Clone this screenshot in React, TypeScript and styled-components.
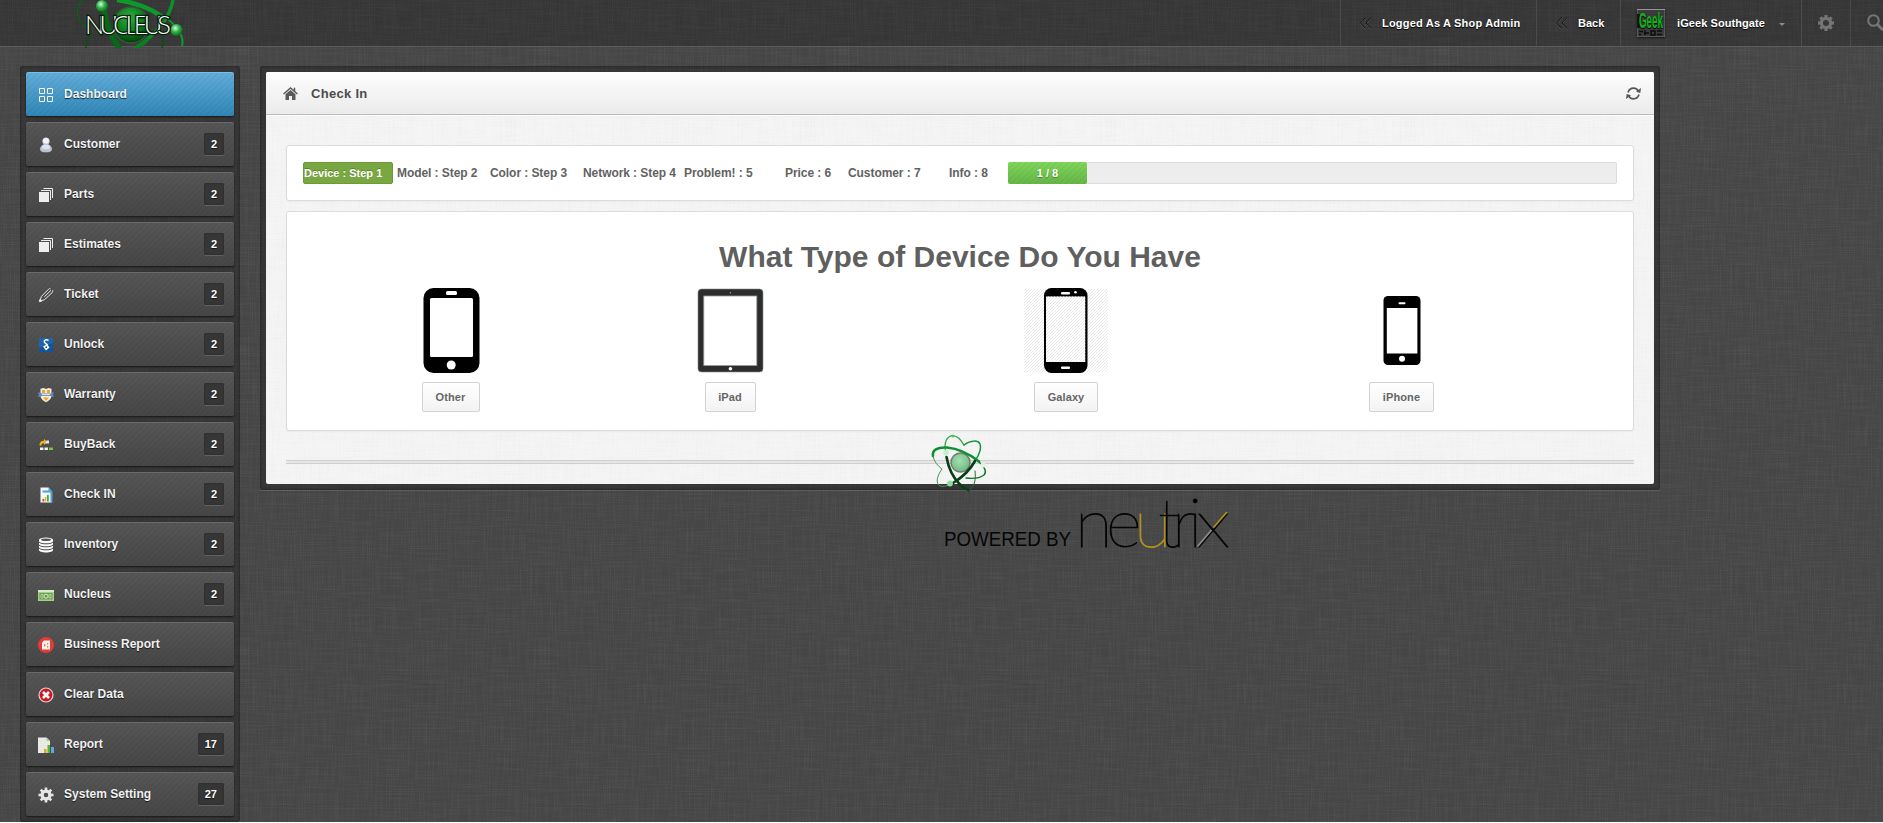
import React from "react";
import styled, { createGlobalStyle, css } from "styled-components";

const linen = (tone: number, strength: number, size = 300) => {
  const layer = (id: string, fx: string, seed: number) =>
    `<filter id="${id}" x="0" y="0" width="100%" height="100%"><feTurbulence type="fractalNoise" baseFrequency="${fx}" numOctaves="2" seed="${seed}" stitchTiles="stitch"/><feColorMatrix values="0 0 0 0 ${tone} 0 0 0 0 ${tone} 0 0 0 0 ${tone} ${strength} 0 0 0 ${-strength * 0.42}"/></filter><rect width="100%" height="100%" filter="url(#${id})"/>`;
  const svg = `<svg xmlns="http://www.w3.org/2000/svg" width="${size}" height="${size}">${layer("h", "0.025 0.95", 4)}${layer("v", "0.95 0.025", 9)}</svg>`;
  return `url("data:image/svg+xml,${encodeURIComponent(svg)}")`;
};

const darkLinen = linen(1, 0.1);
const lightLinen = linen(0, 0.035);
const stripes =
  "repeating-linear-gradient(135deg, rgba(0,0,0,0.07) 0 1px, transparent 1px 4.243px)";

const Global = createGlobalStyle`
  * { box-sizing: border-box; }
  html, body { margin: 0; padding: 0; }
  body {
    background: #fff;
    font-family: "Liberation Sans", Arial, sans-serif;
    font-size: 12px;
    color: #666;
    overflow: hidden;
  }
`;

const Page = styled.div`
  height: 822px;
  overflow: hidden;
  background: #454545 ${darkLinen};
`;

const TopBar = styled.header`
  height: 47px;
  display: flex;
  justify-content: space-between;
  background: rgba(0, 0, 0, 0.22);
  border-bottom: 1px solid #5b5b5b;
`;

const Brand = styled.div`
  height: 48px;
  padding-left: 72px;
`;

const TopNav = styled.nav`
  display: flex;
  width: 543px;
  overflow: hidden;
`;

const TopItem = styled.a<{ $w: number; $pad: number; $gap?: number; $ls?: number }>`
  flex: none;
  width: ${(p) => p.$w}px;
  padding: 0 0 0 ${(p) => p.$pad}px;
  display: flex;
  align-items: center;
  gap: ${(p) => p.$gap ?? 0}px;
  border-left: 1px solid #4b4b4b;
  color: #fff;
  font-size: 11px;
  font-weight: bold;
  letter-spacing: ${(p) => p.$ls ?? 0}px;
  white-space: nowrap;
  text-shadow: 0 1px 1px #000;
`;

const Avatar = styled.span`
  width: 28px;
  height: 28px;
  display: flex;
  flex: none;
  box-shadow: 0 1px 2px rgba(0, 0, 0, 0.6);
`;

const Caret = styled.span`
  border: 3px solid transparent;
  border-top-color: #8a8a8a;
  border-bottom: 0;
  margin: 2px 0 0 2px;
`;

const Columns = styled.div`
  display: flex;
  align-items: flex-start;
  gap: 20px;
  padding: 19px 0 0 20px;
`;

const frame = css`
  padding: 6px;
  background: rgba(0, 0, 0, 0.24);
  border-radius: 3px;
  box-shadow: inset 0 0 3px rgba(0, 0, 0, 0.5), 0 1px 0 rgba(255, 255, 255, 0.12);
`;

const Sidebar = styled.aside`
  ${frame}
  width: 220px;
  height: 756px;
  display: flex;
  flex-direction: column;
  gap: 6px;
`;

const SideItem = styled.a<{ $active?: boolean }>`
  height: 44px;
  flex: none;
  display: flex;
  align-items: center;
  padding: 0 10px 0 12px;
  border-radius: 2px;
  color: #f2f2f2;
  font-weight: bold;
  text-shadow: 0 1px 1px rgba(0, 0, 0, 0.7);
  background: ${stripes},
    ${(p) => (p.$active ? "linear-gradient(#62addb, #2f86b5)" : "linear-gradient(#565656, #464646)")};
  box-shadow: inset 0 1px 0 ${(p) => (p.$active ? "#7dbde3" : "#6a6a6a")}, 0 1px 2px rgba(0, 0, 0, 0.6);
`;

const SideIcon = styled.span`
  width: 16px;
  height: 16px;
  margin: 1px 10px 0 0;
  display: flex;
`;

const SideLabel = styled.span`
  flex: 1;
  margin-top: -1px;
  letter-spacing: 0.03px;
  white-space: nowrap;
`;

const Badge = styled.span`
  height: 22px;
  min-width: 20px;
  padding: 0 7px;
  line-height: 22px;
  border-radius: 2px;
  background: #363636;
  color: #fff;
  font-size: 11px;
  text-align: center;
  box-shadow: inset 0 0 2px #222, 0 1px 0 #626262;
`;

const MainColumn = styled.main`
  width: 1400px;
`;

const Frame = styled.section`
  ${frame}
  height: 424px;
`;

const Panel = styled.div`
  position: relative;
  height: 412px;
  border-radius: 2px;
  background: #f5f5f5 ${lightLinen};
`;

const PanelHead = styled.header`
  height: 43px;
  display: flex;
  align-items: center;
  padding: 0 13px 0 17px;
  border-bottom: 1px solid #bcbcbc;
  box-shadow: 0 1px 0 #fff;
  border-radius: 2px 2px 0 0;
  background: linear-gradient(#fdfdfd, #ebebeb);
`;

const PanelTitle = styled.h1`
  flex: 1;
  margin: 0 0 0 13px;
  font-size: 13px;
  letter-spacing: 0.3px;
  color: #4c4c4c;
`;

const PanelBody = styled.div`
  padding: 30px 20px 0;
`;

const Card = styled.div`
  background: #fff;
  border: 1px solid #dcdcdc;
  border-radius: 3px;
  box-shadow: 0 1px 2px rgba(0, 0, 0, 0.04);
`;

const StepCard = styled(Card)`
  height: 56px;
  padding: 16px;
  display: flex;
`;

const Step = styled.span<{ $w: number }>`
  flex: none;
  width: ${(p) => p.$w}px;
  line-height: 22px;
  font-weight: bold;
  color: #626262;
  letter-spacing: -0.07px;
  white-space: nowrap;
`;

const ActiveStep = styled.span`
  flex: none;
  width: 90px;
  height: 22px;
  margin-right: 4px;
  line-height: 21px;
  border: 1px solid #6b9a37;
  border-radius: 2px;
  background: #79a843;
  color: #fff;
  font-size: 11px;
  font-weight: bold;
  white-space: nowrap;
  text-shadow: 0 -1px 0 rgba(0, 0, 0, 0.25);
`;

const Progress = styled.div`
  flex: 1;
  height: 22px;
  border: 1px solid #dcdcdc;
  border-radius: 2px;
  background: #ededed;
`;

const ProgressFill = styled.div`
  width: 79px;
  height: 22px;
  margin: -1px;
  border-radius: 2px;
  line-height: 22px;
  text-align: center;
  color: #fff;
  font-size: 11px;
  font-weight: bold;
  text-shadow: 0 1px 1px rgba(0, 0, 0, 0.3);
  background: ${stripes}, linear-gradient(#7fd65a, #66b548);
`;

const DeviceCard = styled(Card)`
  height: 220px;
  margin-top: 10px;
`;

const Question = styled.h2`
  margin: 27px 0 13px;
  line-height: 36px;
  font-size: 30px;
  text-align: center;
  color: #5f5f5f;
`;

const DeviceGrid = styled.div`
  display: grid;
  grid-template-columns: 223px 336px 336px 335px;
  padding-left: 52px;
`;

const Device = styled.div`
  display: flex;
  flex-direction: column;
  align-items: center;
  gap: 8px;
`;

const DeviceButton = styled.button<{ $w: number }>`
  width: ${(p) => p.$w}px;
  height: 30px;
  padding: 0;
  border: 1px solid #d2d2d2;
  border-radius: 2px;
  background: linear-gradient(#fff, #f3f3f3);
  font: bold 11px "Liberation Sans", Arial, sans-serif;
  letter-spacing: 0.1px;
  color: #666;
`;

const Rule = styled.div`
  height: 4px;
  margin-top: 29px;
  border: 1px solid #cfcfcf;
  border-width: 1px 0;
  background: #e6e6e6;
`;

const AtomMark = styled.div`
  position: absolute;
  left: 664px;
  top: 361px;
  width: 62px;
  height: 62px;
`;

const Footer = styled.footer`
  display: flex;
  padding: 8px 0 0 680px;
`;

const icons: Record<string, React.ReactNode> = {
  dashboard: (
    <g fill="none" stroke="#f4f4f4" strokeWidth="1">
      <path d="M1.500 1.500h5v5h-5zM9.500 1.500h5v5h-5zM1.500 9.500h5v5h-5zM9.500 9.500h5v5h-5z" />
    </g>
  ),
  customer: (
    <g>
      <path d="M8 0.500c-2.500 0-3.700 1.800-3.700 3.700 0 1.400.6 2.400 1.300 3.300C3.500 8.500 2 10 2 12c0 2.500 2.500 3.300 6 3.300s6-.8 6-3.300c0-2-1.500-3.500-3.600-4.500.7-.9 1.300-1.900 1.300-3.300C11.700 2.300 10.500.5 8 .5z" fill="#bcc2d6" />
      <ellipse cx="8" cy="3.800" rx="3" ry="2.800" fill="#f2f3f8" />
      <ellipse cx="8" cy="10" rx="4" ry="2.200" fill="#dfe2ee" />
    </g>
  ),
  stack: (
    <g>
      <path d="M1 5h10v10H1z" fill="#eee" />
      <path d="M3 3.500h9.500V13M5.500 1.500h9V11" fill="none" stroke="#eee" strokeWidth="1" />
    </g>
  ),
  pencil: (
    <g fill="none" stroke="#e6e6e6" strokeWidth="1">
      <path d="M2 14l1.300-4.500 7.200-7.300c.8-.8 1.500-.8 2-.3M2 14l4.500-1.300L14 5.800c1-.9.800-2 .5-2.700M6.300 9.800L13 3.300" />
      <path d="M1.300 14.700l.8-2.700 1.900 1.900z" fill="#ececec" />
    </g>
  ),
  unlock: (
    <g>
      <path d="M1 1h14v14H1z" fill="#12539b" />
      <path d="M1 1h14v5L1 11z" fill="#2a71b8" opacity=".6" />
      <path d="M10.500 3.500C8.500 2 6 3 6.300 4.800 6.500 6.300 9.500 7 9.500 8.500" fill="none" stroke="#fff" strokeWidth="1.500" />
      <path d="M5 9.500l4-2.300 2.500 3.300-3.500 3z" fill="#fff" />
      <circle cx="8.300" cy="10.200" r=".9" fill="#12539b" />
    </g>
  ),
  warranty: (
    <g>
      <path d="M2.500 1.800L5.500 1 8 2l2.500-1 3 .8v7c0 3-2.500 5-5.500 6.500C5 13.800 2.500 11.800 2.500 8.800z" fill="#f6eddc" />
      <path d="M4 3h3v3H4zM9 3h3v3H9zM5 10.500h6l-3 3.500z" fill="#f1a32c" />
      <path d="M0 5.500h3v1h10v-1h3l-1 2 1 2.200h-3L13 9H3l-.2.700H0l1-2.200z" fill="#5d8fc0" />
      <path d="M4 7h8v1.200H4z" fill="#cfe0f0" />
    </g>
  ),
  buyback: (
    <g>
      <path d="M1.500 8.500C1.500 5 3.500 3.800 6 3.800V2l3.500 3L6 8V6.200C4 6.200 3.500 7 3.500 8.500z" fill="#f2b21d" />
      <path d="M8.500 3.500H11v3H7.500z" fill="#dfe8fa" />
      <path d="M2 10.500h3.400V13H2zM6.500 10.500h3.400V13H6.500z" fill="#f4f4f4" />
      <path d="M11 10.500h4V13h-4z" fill="#72c83a" />
    </g>
  ),
  checkin: (
    <g>
      <path d="M2.500.5h8l3.500 4v11H2.500z" fill="#f3f8fc" />
      <path d="M10.500.5l4 4v11h-2v-10h-8v-2h6z" fill="#4ba0d8" />
      <path d="M4.500 12h1.800v2.500H4.500z" fill="#e33" />
      <path d="M7 10h1.300v4.500H7z" fill="#f5a623" />
      <path d="M9 8h1.800v6.500H9z" fill="#3cb521" />
    </g>
  ),
  inventory: (
    <g>
      <path d="M1 3v10c0 1.400 3 2.500 7 2.500s7-1.100 7-2.500V3z" fill="#fafafa" />
      <ellipse cx="8" cy="3" rx="7" ry="2.500" fill="#fff" />
      <ellipse cx="8" cy="2.800" rx="5" ry="1.200" fill="#555" />
      <path d="M1 5c1.500 1.500 4 1.800 7 1.800s5.500-.3 7-1.800M1 8c1.500 1.500 4 1.800 7 1.800S13.500 9.500 15 8M1 11c1.500 1.500 4 1.800 7 1.800s5.500-.3 7-1.800" fill="none" stroke="#4c4c4c" strokeWidth="1" />
    </g>
  ),
  money: (
    <g>
      <path d="M0 3h16v11H0z" fill="#a5cf86" />
      <path d="M0 3h16v2H0z" fill="#d8edc9" />
      <path d="M1.500 6h13v6.500h-13z" fill="#6c9c52" />
      <circle cx="8" cy="9.200" r="2" fill="none" stroke="#d8edc9" />
      <path d="M3 7.500h2v3.500H3zM11 7.500h2v3.500h-2z" fill="none" stroke="#c2e0ae" strokeWidth=".8" />
    </g>
  ),
  business: (
    <g>
      <circle cx="8" cy="8" r="8" fill="#e23b3b" />
      <path d="M6 3.500h6v9H4V5.500z" fill="#fff3ee" />
      <path d="M6 7h1.300v2.500H6zM9 6h1.200v1.500H9z" fill="#e0745a" />
      <path d="M9 9h1.300v1.500H9z" fill="#88a34a" />
    </g>
  ),
  clear: (
    <g>
      <circle cx="8" cy="8" r="7" fill="#c9191f" stroke="#e6d2d2" strokeWidth="1.200" />
      <path d="M5 5l6 6M11 5l-6 6" stroke="#fff" strokeWidth="2.600" />
    </g>
  ),
  report: (
    <g>
      <path d="M0 .5h8.500L12 4v12H0z" fill="#e9e9e6" />
      <path d="M8.500.5V4H12z" fill="#bbb" />
      <path d="M6 12h2.500v4H6z" fill="#f0a021" />
      <path d="M9.500 8h2.500v8H9.500z" fill="#57b82c" />
      <path d="M13 10h3v6h-3z" fill="#58a9e4" />
    </g>
  ),
};

const gearTeeth = (cx: number, cy: number, r: number, n: number, w: number, h: number) =>
  Array.from({ length: n }, (_, i) => (
    <rect key={i} x={cx - w / 2} y={cy - r} width={w} height={h} transform={`rotate(${(360 / n) * i} ${cx} ${cy})`} />
  ));

icons.gear = (
  <g fill="#e6e6e6">
    {gearTeeth(8, 8, 7.5, 8, 2.6, 4)}
    <circle cx="8" cy="8" r="3.900" fill="none" stroke="#e6e6e6" strokeWidth="3.200" />
  </g>
);

const menu: { label: string; icon: string; count?: number }[] = [
  { label: "Dashboard", icon: "dashboard" },
  { label: "Customer", icon: "customer", count: 2 },
  { label: "Parts", icon: "stack", count: 2 },
  { label: "Estimates", icon: "stack", count: 2 },
  { label: "Ticket", icon: "pencil", count: 2 },
  { label: "Unlock", icon: "unlock", count: 2 },
  { label: "Warranty", icon: "warranty", count: 2 },
  { label: "BuyBack", icon: "buyback", count: 2 },
  { label: "Check IN", icon: "checkin", count: 2 },
  { label: "Inventory", icon: "inventory", count: 2 },
  { label: "Nucleus", icon: "money", count: 2 },
  { label: "Business Report", icon: "business" },
  { label: "Clear Data", icon: "clear" },
  { label: "Report", icon: "report", count: 17 },
  { label: "System Setting", icon: "gear", count: 27 },
];

const steps = [
  { text: "Model : Step 2", w: 93 },
  { text: "Color : Step 3", w: 93 },
  { text: "Network : Step 4", w: 101 },
  { text: "Problem! : 5", w: 101 },
  { text: "Price : 6", w: 63 },
  { text: "Customer : 7", w: 101 },
  { text: "Info : 8", w: 59 },
];

const NucleusLogo = () => (
  <svg width="120" height="48" viewBox="72 0 120 48">
    <defs>
      <radialGradient id="core" cx=".45" cy=".3" r=".7">
        <stop offset="0" stopColor="#2fae3e" />
        <stop offset=".6" stopColor="#087a1c" />
        <stop offset="1" stopColor="#033d0b" />
      </radialGradient>
      <radialGradient id="bead" cx=".4" cy=".35" r=".65">
        <stop offset="0" stopColor="#d9ffdf" />
        <stop offset=".5" stopColor="#35b14a" />
        <stop offset="1" stopColor="#0a6d1e" />
      </radialGradient>
    </defs>
    <g fill="none">
      <path d="M83 0C73 9 77 21 90 31" stroke="#0a6119" strokeWidth="1.300" />
      <path d="M162 15c8 5 14 11 18 18 3 5 3 9 2 13" stroke="#0d9a2b" strokeWidth="2" />
      <path d="M117 0c16 2 34 8 45 17" stroke="#0d9a2b" strokeWidth="4.500" />
      <path d="M173 0c-3 18-18 36-38 48" stroke="#0b8f26" strokeWidth="3.500" />
      <path d="M104 10c2 13 7 28 16 39" stroke="#07681a" strokeWidth="5.500" />
      <path d="M92 32c-4 6-6 10-6 16M162 36c1 4 1 8 0 12" stroke="#07501a" strokeWidth="1.500" />
    </g>
    <circle cx="131" cy="25" r="18" fill="url(#core)" stroke="#36543a" strokeWidth="1.500" />
    <path d="M149 38c-4 4-8 7-13 10" stroke="#0b7d22" strokeWidth="4" fill="none" />
    <circle cx="102" cy="6" r="6" fill="url(#bead)" />
    <circle cx="176.500" cy="30" r="6" fill="url(#bead)" />
    <g fontFamily="Lato, sans-serif" fontWeight="300" fontSize="25.500">
      <text x="85" y="33.500" textLength="86" lengthAdjust="spacing" fill="#fff" stroke="#042008" strokeWidth="2.600" paintOrder="stroke">NUCLEUS</text>
    </g>
  </svg>
);

const Chevrons = () => (
  <svg width="13" height="13" viewBox="0 0 13 13" fill="none">
    <path d="M6.500 1.500L1.500 7l5 5.500M12 1.500L7 7l5 5.500" stroke="#555" />
    <path d="M6.500.5L1.500 6l5 5.500M12 .5L7 6l5 5.500" stroke="#161616" />
  </svg>
);

const AvatarArt = () => (
  <svg width="28" height="28" viewBox="0 0 28 28">
    <rect width="28" height="28" fill="#3b3b3b" stroke="#777" />
    <path d="M0 .5h28" stroke="#999" />
    <path d="M0 5h3v14H0z" fill="#151515" />
    <text x="2" y="10.700" fontFamily="Liberation Sans, sans-serif" fontWeight="bold" fontSize="12.500" transform="scale(1 1.750)" textLength="24" lengthAdjust="spacingAndGlyphs" fill="#12b51a">Geek</text>
    <path d="M2 22.500h4M8 21v5M7 24h5M14 22h4v4h-4zM20 22h5M20 25.500h5M2 25.500h2" stroke="#0b0b0b" fill="none" strokeWidth="1.400" />
  </svg>
);

const TopGear = () => (
  <svg width="16" height="16" viewBox="0 0 16 16" fill="#757575">
    {gearTeeth(8, 8, 8, 8, 3.2, 4)}
    <circle cx="8" cy="8" r="4.600" fill="none" stroke="#757575" strokeWidth="3.200" />
  </svg>
);

const SearchIcon = () => (
  <svg width="18" height="18" viewBox="0 0 18 18" fill="none" stroke="#757575">
    <circle cx="6.500" cy="6.500" r="5.300" strokeWidth="2" />
    <path d="M10.500 10.500l5.500 5.500" strokeWidth="3" />
  </svg>
);

const HomeIcon = () => (
  <svg width="15" height="13" viewBox="0 0 15 13">
    <path d="M7.500 3L2.500 7.300V13H6V9h3v4h3.500V7.300z" fill="#5a5a5a" />
    <path d="M.6 7L7.500 1l6.900 6M11.500.8V4" fill="none" stroke="#5a5a5a" strokeWidth="1.500" />
  </svg>
);

const RefreshIcon = () => (
  <svg width="15" height="13" viewBox="0 0 15 13" fill="none" stroke="#555" strokeWidth="1.700">
    <path d="M2 5.500C3 2.500 5 1.200 7.500 1.200c2.200 0 3.700 1 4.700 2.600M13 7.500c-1 3-3 4.300-5.500 4.300-2.200 0-3.700-1-4.700-2.600" />
    <path d="M15 1l-.7 5L10 4.800zM0 12l.7-5L5 8.200z" fill="#555" stroke="none" />
  </svg>
);

const OtherPhone = () => (
  <svg width="58" height="86" viewBox="0 0 58 86">
    <rect x="1.500" y="0" width="56" height="85" rx="10" />
    <rect x="8" y="10" width="43" height="59" rx="1.500" fill="#fff" />
    <rect x="24" y="3" width="11" height="4" rx="1.500" fill="#fff" />
    <circle cx="29.200" cy="77" r="4.500" fill="#fff" />
  </svg>
);

const IPad = () => (
  <svg width="67" height="86" viewBox="0 0 67 86">
    <rect x="1" y="1" width="65" height="83" rx="3.500" fill="#2c2e2d" stroke="#8a8a8a" strokeWidth=".6" />
    <rect x="6.800" y="8" width="53" height="69.500" fill="#fff" stroke="#999" strokeWidth=".8" />
    <circle cx="33.400" cy="80.700" r="1.800" fill="#fff" />
    <circle cx="33.400" cy="4.700" r=".7" fill="#aaa" />
  </svg>
);

const Galaxy = () => (
  <svg width="84" height="86" viewBox="0 0 84 86">
    <defs>
      <pattern id="hatch" width="3" height="3" patternUnits="userSpaceOnUse">
        <path d="M-1 1l2-2M0 3l3-3M2 4l2-2" stroke="#e6e6e6" strokeWidth=".9" />
      </pattern>
    </defs>
    <rect y="1" width="84" height="83.500" fill="url(#hatch)" />
    <rect x="20" y="0" width="43.500" height="85" rx="7.500" />
    <rect x="22" y="8.500" width="39.200" height="65.500" fill="#fff" />
    <rect x="22" y="8.500" width="39.200" height="65.500" fill="url(#hatch)" />
    <rect x="37" y="4" width="9" height="2.500" rx="1" fill="#fff" />
    <circle cx="51.500" cy="4.300" r="1.300" fill="#fff" />
    <rect x="37" y="78.500" width="9" height="2.500" rx="1" fill="#fff" />
  </svg>
);

const IPhone = () => (
  <svg width="38" height="86" viewBox="0 0 38 86">
    <rect x=".5" y="8" width="37" height="69" rx="4.500" />
    <rect x="3.800" y="20" width="30.600" height="45.500" fill="#fff" />
    <rect x="15.500" y="14.300" width="7" height="2" rx="1" fill="#fff" />
    <circle cx="19" cy="70.800" r="3" fill="#fff" />
  </svg>
);

const devices = [
  { name: "Other", art: <OtherPhone />, w: 58 },
  { name: "iPad", art: <IPad />, w: 51 },
  { name: "Galaxy", art: <Galaxy />, w: 64 },
  { name: "iPhone", art: <IPhone />, w: 65 },
];

const Atom = () => (
  <svg width="62" height="62" viewBox="0 0 62 62" fill="none">
    <defs>
      <radialGradient id="nucleus" cx=".45" cy=".4" r=".6">
        <stop offset="0" stopColor="#a5dfb0" />
        <stop offset="1" stopColor="#6fbb80" />
      </radialGradient>
    </defs>
    <circle cx="30.500" cy="29.500" r="9.500" fill="url(#nucleus)" stroke="#777" strokeWidth="1.500" />
    <g strokeLinecap="round">
      <path d="M15.500 18C14 9 17 4 22 2.500c6 0 9 5 12 9.500" stroke="#2aa544" strokeWidth="1.200" />
      <path d="M34 12c7-5 14-5 16-1 2 5-1 11-5 17" stroke="#17933a" strokeWidth="1.500" />
      <path d="M3 23c-1-6 4-9 14-8.500 12 1 23 7 32 14" stroke="#0c9230" strokeWidth="2.600" />
      <path d="M49 29c6 5 8 10 5 13-4 3-10 4-18 3" stroke="#14702a" strokeWidth="1.400" />
      <path d="M3 23c1 6 5 10 9 13-6 8-6 15-2 17 3 1 6 0 9-1" stroke="#4c8f59" strokeWidth="1" />
      <path d="M16.500 24c2 11 7 21 13 27 3 3 6 5 9 6" stroke="#053f12" strokeWidth="2.600" />
      <path d="M45 28c-5 9-12 16-22 22" stroke="#063f13" strokeWidth="2.600" />
      <path d="M40 56c5-3 6-10 5-18" stroke="#1f6e30" strokeWidth="1" />
    </g>
    <circle cx="16" cy="19.500" r="2.800" fill="#c4f0cc" />
    <circle cx="20" cy="50.500" r="2.900" fill="#8fdd9c" />
    <circle cx="53" cy="32" r="2.600" fill="#dbf5df" />
    <circle cx="23" cy="3" r="1.600" fill="#4fc768" />
  </svg>
);

const Powered = () => (
  <svg width="300" height="66" viewBox="940 498 300 66">
    <defs>
      <linearGradient id="cross" gradientUnits="userSpaceOnUse" x1="1196" y1="546" x2="1228" y2="512">
        <stop offset=".45" stopColor="#8d8d8d" />
        <stop offset=".45" stopColor="#050505" />
        <stop offset=".55" stopColor="#050505" />
        <stop offset=".55" stopColor="#b09020" />
      </linearGradient>
    </defs>
    <text x="944" y="546" fontFamily="Liberation Sans, sans-serif" fontSize="21" textLength="127" lengthAdjust="spacingAndGlyphs" fill="#050505">POWERED BY</text>
    <g fontFamily="Lato, sans-serif" fontWeight="100" fontSize="69" fill="#050505" stroke="#050505" strokeWidth=".9">
      <text y="547" x="1075 1106 1134 1158 1172 1188">
        ne<tspan fill="#b09020" stroke="#b09020">u</tspan>tri
      </text>
      <text transform="translate(1196 547) scale(1.12 1)" x="0" y="0" fill="#050505">x</text>
    </g>
    <path d="M1213.500 527.500L1227 512" stroke="#b09020" strokeWidth="1.800" />
    <path d="M1197.500 546.500L1211.500 530" stroke="#8d8d8d" strokeWidth="1.800" />
  </svg>
);

export default function App() {
  return (
    <Page>
      <Global />
      <TopBar>
        <Brand>
          <NucleusLogo />
        </Brand>
        <TopNav>
          <TopItem $w={196} $pad={18} $gap={10} $ls={0.2}>
            <Chevrons />
            Logged As A Shop Admin
          </TopItem>
          <TopItem $w={84} $pad={18} $gap={10}>
            <Chevrons />
            Back
          </TopItem>
          <TopItem $w={181} $pad={16} $gap={12} $ls={0.08}>
            <Avatar>
              <AvatarArt />
            </Avatar>
            iGeek Southgate
            <Caret />
          </TopItem>
          <TopItem $w={49} $pad={16}>
            <TopGear />
          </TopItem>
          <TopItem $w={60} $pad={16}>
            <SearchIcon />
          </TopItem>
        </TopNav>
      </TopBar>
      <Columns>
        <Sidebar>
          {menu.map((item, i) => (
            <SideItem key={item.label} $active={i === 0}>
              <SideIcon>
                <svg width="16" height="16" viewBox="0 0 16 16">
                  {icons[item.icon]}
                </svg>
              </SideIcon>
              <SideLabel>{item.label}</SideLabel>
              {item.count && <Badge>{item.count}</Badge>}
            </SideItem>
          ))}
        </Sidebar>
        <MainColumn>
          <Frame>
            <Panel>
              <PanelHead>
                <HomeIcon />
                <PanelTitle>Check In</PanelTitle>
                <RefreshIcon />
              </PanelHead>
              <PanelBody>
                <StepCard>
                  <ActiveStep>Device : Step 1</ActiveStep>
                  {steps.map((s) => (
                    <Step key={s.text} $w={s.w}>
                      {s.text}
                    </Step>
                  ))}
                  <Progress>
                    <ProgressFill>1 / 8</ProgressFill>
                  </Progress>
                </StepCard>
                <DeviceCard>
                  <Question>What Type of Device Do You Have</Question>
                  <DeviceGrid>
                    {devices.map((d) => (
                      <Device key={d.name}>
                        {d.art}
                        <DeviceButton $w={d.w}>{d.name}</DeviceButton>
                      </Device>
                    ))}
                  </DeviceGrid>
                </DeviceCard>
                <Rule />
              </PanelBody>
              <AtomMark>
                <Atom />
              </AtomMark>
            </Panel>
          </Frame>
          <Footer>
            <Powered />
          </Footer>
        </MainColumn>
      </Columns>
    </Page>
  );
}
